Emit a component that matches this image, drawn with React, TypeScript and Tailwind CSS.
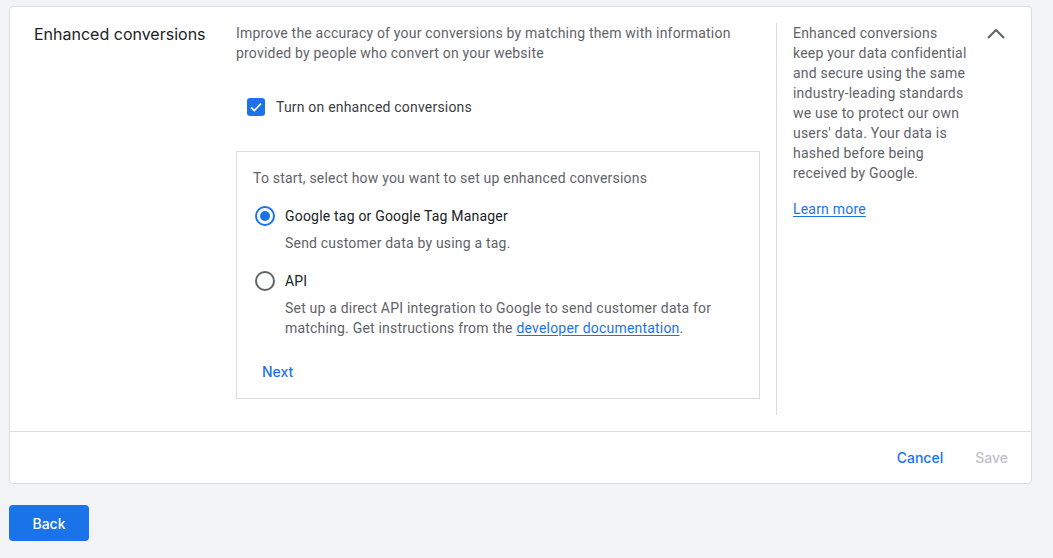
import React from 'react';

const body = "font-['Roboto','Liberation_Sans',sans-serif] tracking-[0.2px]";
const heading = "font-['Inter','Roboto',sans-serif] tracking-normal";

function Checkbox({ checked }: { checked: boolean }) {
  return (
    <div className="w-[18px] h-[18px] rounded-[3px] bg-[#1a73e8] flex items-center justify-center shrink-0">
      {checked && (
        <svg width="16" height="16" viewBox="0 0 24 24" fill="none">
          <path d="M4.5 12.5l5 5 10-10.5" stroke="#fff" strokeWidth="2.4" />
        </svg>
      )}
    </div>
  );
}

function Radio({ selected }: { selected: boolean }) {
  return (
    <div className="w-6 h-6 flex items-center justify-center shrink-0">
      <div
        className={
          selected
            ? "w-5 h-5 rounded-full border-2 border-[#1a73e8] flex items-center justify-center"
            : "w-5 h-5 rounded-full border-2 border-[#5f6368]"
        }
      >
        {selected && <div className="w-[10px] h-[10px] rounded-full bg-[#1a73e8]" />}
      </div>
    </div>
  );
}

function Option({
  selected,
  label,
  children,
}: {
  selected: boolean;
  label: string;
  children: React.ReactNode;
}) {
  return (
    <div>
      <div className="flex items-center gap-2 h-6">
        <Radio selected={selected} />
        <span className="text-[14px] leading-5 text-[#202124]">{label}</span>
      </div>
      <p className="pl-8 mt-[5px] text-[14px] leading-5 text-[#5f6368]">{children}</p>
    </div>
  );
}

export default function App() {
  return (
    <div className={`min-h-[558px] bg-[#f1f3f4] pt-[6px] pl-[9px] ${body}`}>
      <div className="w-[1023px] bg-white border border-[#dadce0] rounded-[4px]">
        {/* Section row */}
        <div className="flex pt-4 pb-4">
          <div className="w-[226px] pl-[24px] shrink-0">
            <h2 className={`${heading} text-[16px] leading-[22px] text-[#202124] tracking-[-0.1px]`}>Enhanced conversions</h2>
          </div>

          <div className="w-[524px] shrink-0 pb-4">
            <p className="text-[14px] leading-5 text-[#5f6368]">
              Improve the accuracy of your conversions by matching them with information provided by people who convert on
              your website
            </p>

            <label className="mt-[34px] ml-[11px] flex items-center gap-[11px] h-5">
              <Checkbox checked />
              <span className="text-[14px] leading-5 text-[#3c4043]">Turn on enhanced conversions</span>
            </label>

            <div className="mt-[34px] border border-[#dadce0] px-4 pt-4 pb-[14px]">
              <p className="text-[14px] leading-5 text-[#5f6368]">To start, select how you want to set up enhanced conversions</p>

              <div className="mt-4">
                <Option selected label="Google tag or Google Tag Manager">
                  Send customer data by using a tag.
                </Option>
              </div>

              <div className="mt-4">
                <Option selected={false} label="API">
                  Set up a direct API integration to Google to send customer data for matching. Get instructions from the{' '}
                  <a className="text-[#1a73e8] underline underline-offset-2">developer documentation</a>.
                </Option>
              </div>

              <button className={`${heading} mt-6 ml-[9px] text-[14px] leading-5 font-medium text-[#1a73e8]`}>Next</button>
            </div>
          </div>

          <div className="ml-4 border-l border-[#dadce0] pl-4 flex-1 flex pr-[26px]">
            <div className="w-[176px] text-[14px] leading-5 text-[#5f6368]">
              <p>
                Enhanced conversions keep your data confidential and secure using the same industry-leading standards we use
                to protect our own users' data. Your data is hashed before being received by Google.
              </p>
              <a className="block mt-4 text-[#1a73e8] underline underline-offset-2">Learn more</a>
            </div>
            <div className="ml-auto">
              <svg width="20" height="20" viewBox="0 0 20 20" fill="none">
                <path d="M3 15L11 7L19 15" stroke="#5f6368" strokeWidth="2" />
              </svg>
            </div>
          </div>
        </div>

        {/* Footer */}
        <div className={`${heading} border-t border-[#dadce0] h-[52px] flex items-center justify-end pr-[15px] gap-4 text-[14px] font-medium`}>
          <button className="px-2 h-9 text-[#1a73e8]">Cancel</button>
          <button className="px-2 h-9 text-[#bdc1c6]">Save</button>
        </div>
      </div>

      <button
        className={`${heading} mt-[21px] w-20 h-9 rounded-[4px] bg-[#1a73e8] text-white text-[14px] font-medium`}
      >
        Back
      </button>
    </div>
  );
}
